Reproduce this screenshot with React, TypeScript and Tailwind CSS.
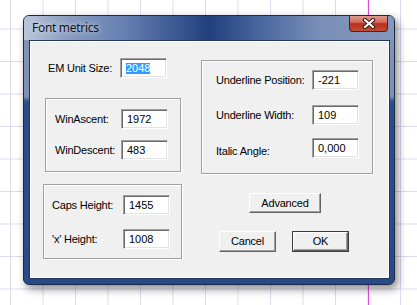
const labelFont = "font-['Liberation_Sans',Arial,sans-serif] text-[11px] tracking-[-0.2px] text-black";

function Field({ value, selected }: { value: string; selected?: boolean }) {
  return (
    <div className="w-[47px] h-[20px] flex items-center pl-[5px] bg-white border border-t-[#a0a0a0] border-l-[#a0a0a0] border-r-white border-b-white shadow-[inset_1px_1px_0_#696969,inset_-1px_-1px_0_#e3e3e3]">
      {selected ? (
        <span className={`${labelFont} tracking-normal leading-[11px] h-[11px] inline-block bg-[#3399ff] text-white`}>{value}</span>
      ) : (
        <span className={`${labelFont} tracking-normal`}>{value}</span>
      )}
    </div>
  );
}

function Row({ label, value, labelW, className = "", labelClass = "" }: { label: string; value: string; labelW: string; className?: string; labelClass?: string }) {
  return (
    <div className={`flex items-center h-[20px] ${className}`}>
      <span className={`${labelFont} ${labelW} ${labelClass}`}>{label}</span>
      <Field value={value} />
    </div>
  );
}

function Button({ children, isDefault, className = "" }: { children: string; isDefault?: boolean; className?: string }) {
  return (
    <div className={`${className} ${isDefault ? "border border-[#3c3c3c]" : ""}`}>
      <div className="w-full h-full flex items-center justify-center bg-[#f0f0f0] border border-t-white border-l-white border-r-[#646464] border-b-[#646464] shadow-[inset_-1px_-1px_0_#a0a0a0]">
        <span className={labelFont}>{children}</span>
      </div>
    </div>
  );
}

const group = "border border-[#a0a0a0] shadow-[inset_1px_1px_0_#fff,1px_1px_0_#fff]";

export default function App() {
  return (
    <div className="w-[417px] h-[305px] overflow-hidden pt-[15px] pl-[23px] bg-white [background-image:linear-gradient(to_right,transparent_368px,#e24ae2_368px,#e24ae2_369px,transparent_369px),linear-gradient(to_right,#dedaf0_1px,transparent_1px),linear-gradient(to_bottom,#dedaf0_1px,transparent_1px)] [background-size:100%_100%,32.5px_32.5px,32.5px_32.5px] [background-position:0_0,10px_0,0_28.5px]">
      <div className="w-[372px] h-[270px] flex flex-col rounded-[6px] border border-[#1b2a44] overflow-hidden shadow-[3px_4px_9px_rgba(0,0,0,0.45)] bg-[linear-gradient(to_bottom,#8495b8_0%,#7d90b5_30%,#2c4c8a_32%,#2a4987_100%)]">
        {/* title bar */}
        <div className="h-[24px] flex items-start bg-[linear-gradient(to_right,#b9c6da_0%,#8a9dc0_12%,#647db0_28%,#21407c_50%,#4a679e_64%,#7a8fb8_80%,#8497bc_100%)]">
          <span className="pl-[8px] pt-[4px] font-['Noto_Sans',sans-serif] text-[12px] tracking-[-0.3px] leading-[16px] text-[#141414] [text-shadow:0_0_5px_#e8eef8]">
            Font metrics
          </span>
          <div className="ml-auto mr-[6px] mt-[-1px] w-[39px] h-[17px] rounded-b-[4px] border border-t-0 border-[#55201a] bg-[linear-gradient(to_bottom,#e2a49a_0%,#d2695a_45%,#b8321f_55%,#c44a34_100%)] flex items-center justify-center">
            <svg width="14" height="11" viewBox="0 0 14 11">
              <path d="M3 2 L11 9 M11 2 L3 9" stroke="#3b1a16" strokeWidth="4.2" strokeLinecap="round" />
              <path d="M3 2 L11 9 M11 2 L3 9" stroke="#ffffff" strokeWidth="2.2" strokeLinecap="round" />
            </svg>
          </div>
        </div>
        {/* client */}
        <div className="ml-[5px] mr-[4px] h-[239px] border border-[#22375e] bg-[#f0f0f0] shadow-[inset_1px_1px_0_#fff,inset_-1px_-1px_0_#fff] flex">
          <div className="w-[153px] flex flex-col">
            <div className="mt-[17px] ml-[18px] flex items-center h-[20px]">
              <span className={`${labelFont} w-[72px]`}>EM Unit Size:</span>
              <Field value="2048" selected />
            </div>
            <div className={`mt-[20px] ml-[15px] w-[136px] h-[74px] pt-[10px] pl-[9px] ${group}`}>
              <Row label="WinAscent:" value="1972" labelW="w-[66px]" />
              <Row label="WinDescent:" value="483" labelW="w-[66px]" className="mt-[11px]" />
            </div>
            <div className={`mt-[12px] ml-[13px] w-[139px] h-[75px] pt-[10px] pl-[8px] ${group}`}>
              <Row label="Caps Height:" value="1455" labelW="w-[71px]" />
              <Row label="'x' Height:" value="1008" labelW="w-[71px]" className="mt-[14px]" />
            </div>
          </div>
          <div className="flex flex-col ml-[18px]">
            <div className={`mt-[19px] w-[172px] h-[114px] pt-[9px] pl-[14px] ${group}`}>
              <Row label="Underline Position:" value="-221" labelW="w-[96px]" />
              <Row label="Underline Width:" value="109" labelW="w-[96px]" className="mt-[15px]" />
              <Row label="Italic Angle:" value="0,000" labelW="w-[96px]" className="mt-[13px]" labelClass="mt-[6px]" />
            </div>
            <Button className="mt-[19px] ml-[48px] w-[72px] h-[20px]">Advanced</Button>
            <div className="mt-[18px] ml-[18px] flex">
              <Button className="w-[57px] h-[21px]">Cancel</Button>
              <Button isDefault className="ml-[16px] w-[57px] h-[21px]">OK</Button>
            </div>
          </div>
        </div>
      </div>
    </div>
  );
}
